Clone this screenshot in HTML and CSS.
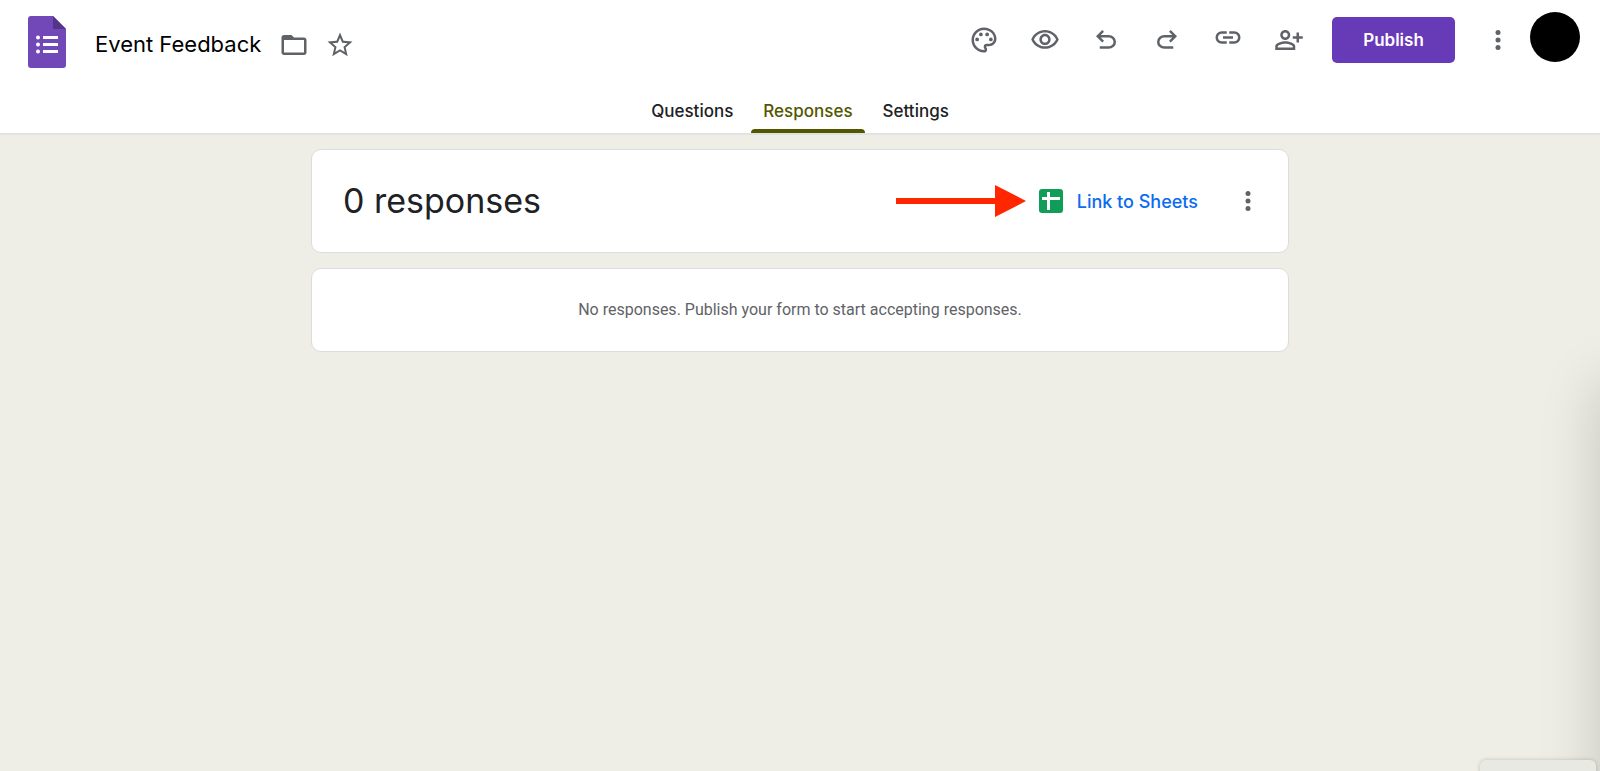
FILE: index.html
```
<!DOCTYPE html>
<html lang="en">
<head>
  <meta charset="UTF-8">
  <title>Event Feedback</title>
  <meta name="viewport" content="width=device-width, initial-scale=1.0">
  <link rel="stylesheet" href="styles.css">
</head>

<body>
  <header class="header">
    <div class="topbar">
      <div class="doc">
        <a class="logo" href="#" aria-label="Forms home">
          <svg width="38" height="52" viewBox="0 0 38 52">
            <path fill="#7248b9" d="M3 0h22l13 13v36a3 3 0 0 1-3 3H3a3 3 0 0 1-3-3V3a3 3 0 0 1 3-3z"/>
            <path fill="#533488" d="M25 0l13 13H25z"/>
            <g fill="#fff">
              <circle cx="10" cy="21.500" r="2"/>
              <circle cx="10" cy="28.500" r="2"/>
              <circle cx="10" cy="35.500" r="2"/>
              <path d="M15 20h15v3H15zM15 27h15v3H15zM15 34h15v3H15z"/>
            </g>
          </svg>
        </a>
        <h1 class="doc-title">Event Feedback</h1>
        <button class="doc-btn" type="button" aria-label="Move to folder">
          <svg class="icon" viewBox="0 0 24 24"><path d="M20 6h-8l-2-2H4c-1.100 0-2 .9-2 2v12c0 1.100.9 2 2 2h16c1.100 0 2-.9 2-2V8c0-1.100-.9-2-2-2zm0 12H4V8h16v10z"/></svg>
        </button>
        <button class="doc-btn" type="button" aria-label="Star">
          <svg class="icon" viewBox="0 0 24 24"><path d="M22 9.240l-7.190-.62L12 2 9.190 8.630 2 9.240l5.460 4.730L5.820 21 12 17.270 18.180 21l-1.630-7.030L22 9.240zM12 15.400l-3.760 2.270 1-4.280-3.320-2.880 4.380-.38L12 6.100l1.710 4.040 4.380.38-3.320 2.880 1 4.280L12 15.400z"/></svg>
        </button>
      </div>

      <div class="actions">
        <button class="icon-btn" type="button" aria-label="Customize theme">
          <svg class="icon" viewBox="0 0 24 24"><path d="M12 22C6.490 22 2 17.510 2 12S6.490 2 12 2s10 4.040 10 9c0 3.310-2.690 6-6 6h-1.770c-.28 0-.5.22-.5.5 0 .12.05.23.13.33.41.47.64 1.060.64 1.670A2.500 2.500 0 0 1 12 22zm0-18c-4.410 0-8 3.590-8 8s3.590 8 8 8c.28 0 .5-.22.5-.5a.54.54 0 0 0-.14-.35c-.41-.46-.63-1.050-.63-1.650a2.500 2.500 0 0 1 2.500-2.500H16c2.210 0 4-1.790 4-4 0-3.860-3.590-7-8-7z"/><circle cx="6.500" cy="11.500" r="1.500"/><circle cx="9.500" cy="7.500" r="1.500"/><circle cx="14.500" cy="7.500" r="1.500"/><circle cx="17.500" cy="11.500" r="1.500"/></svg>
        </button>
        <button class="icon-btn" type="button" aria-label="Preview">
          <svg class="icon" viewBox="0 0 24 24"><path d="M12 6c3.790 0 7.170 2.130 8.820 5.500C19.170 14.870 15.790 17 12 17s-7.170-2.130-8.820-5.500C4.830 8.130 8.210 6 12 6m0-2C7 4 2.730 7.110 1 11.500 2.730 15.890 7 19 12 19s9.270-3.110 11-7.500C21.270 7.110 17 4 12 4zm0 5c1.380 0 2.500 1.120 2.500 2.500S13.380 14 12 14s-2.500-1.120-2.500-2.500S10.620 9 12 9m0-2c-2.480 0-4.500 2.020-4.500 4.500S9.520 16 12 16s4.500-2.020 4.500-4.500S14.480 7 12 7z"/></svg>
        </button>
        <button class="icon-btn" type="button" aria-label="Undo">
          <svg class="icon" viewBox="0 0 24 24"><path d="M7 19v-2h7.100q1.575 0 2.737-1T18 13.500 16.838 11 14.100 10H7.800l2.600 2.600L9 14 4 9l5-5 1.400 1.400L7.800 8h6.300q2.425 0 4.163 1.575T20 13.500t-1.737 3.925T14.100 19z"/></svg>
        </button>
        <button class="icon-btn" type="button" aria-label="Redo">
          <svg class="icon" viewBox="0 0 24 24"><path d="M17 19v-2H9.900q-1.575 0-2.737-1T6 13.500 7.162 11 9.900 10h6.300l-2.600 2.600L15 14l5-5-5-5-1.400 1.400L16.200 8H9.900q-2.425 0-4.163 1.575T4 13.500t1.737 3.925T9.900 19z"/></svg>
        </button>
        <button class="icon-btn" type="button" aria-label="Copy link">
          <svg class="icon" viewBox="0 2 24 24"><path d="M11 17H7q-2.075 0-3.537-1.463T2 12t1.463-3.537T7 7h4v2H7q-1.250 0-2.125.875T4 12t.875 2.125T7 15h4zm-3-4v-2h8v2zm5 4v-2h4q1.250 0 2.125-.875T20 12t-.875-2.125T17 9h-4V7h4q2.075 0 3.538 1.463T22 12t-1.463 3.537T17 17z"/></svg>
        </button>
        <button class="icon-btn" type="button" aria-label="Share">
          <svg class="icon" viewBox="0 0 24 24"><path d="M13 8c0-2.210-1.790-4-4-4S5 5.790 5 8s1.790 4 4 4 4-1.790 4-4zm-2 0c0 1.100-.9 2-2 2s-2-.9-2-2 .9-2 2-2 2 .9 2 2zM1 17v3h16v-3c0-2.660-5.330-4-8-4s-8 1.340-8 4zm2 1v-1c.2-.71 3.300-2 6-2s5.780 1.280 6 2v1H3zM20 14v-3h3V9h-3V6h-2v3h-3v2h3v3h2z"/></svg>
        </button>
        <button class="publish" type="button">Publish</button>
        <button class="icon-btn" type="button" aria-label="More">
          <svg class="icon" viewBox="0 0 24 24"><circle cx="12" cy="6" r="2"/><circle cx="12" cy="12" r="2"/><circle cx="12" cy="18" r="2"/></svg>
        </button>
        <button class="avatar" type="button" aria-label="Account"></button>
      </div>
    </div>

    <nav class="tabs">
      <a class="tab" href="#questions">Questions</a>
      <a class="tab active" href="#responses">Responses</a>
      <a class="tab" href="#settings">Settings</a>
    </nav>
  </header>

  <main class="content">
    <section class="card summary">
      <h2 class="count">0 responses</h2>
      <svg class="arrow" width="130" height="32" viewBox="0 0 130 32">
        <path fill="#ff2600" d="M0 13h99V0l31 16-31 16V19H0z"/>
      </svg>
      <button class="sheets" type="button">
        <svg width="24" height="24" viewBox="0 0 24 24">
          <rect width="24" height="24" rx="3" fill="#0f9d58"/>
          <path fill="#fff" d="M8 3h3v5h10v3H11v10H8V11H3V8h5z"/>
        </svg>
        Link to Sheets
      </button>
      <button class="icon-btn" type="button" aria-label="More options">
        <svg class="icon" viewBox="0 0 24 24"><circle cx="12" cy="6" r="2"/><circle cx="12" cy="12" r="2"/><circle cx="12" cy="18" r="2"/></svg>
      </button>
    </section>

    <section class="card empty">
      <p>No responses. Publish your form to start accepting responses.</p>
    </section>
  </main>

  <!-- panel parked off the right edge, only its shadow shows -->
  <div class="side-panel"></div>
  <div class="corner-box"></div>
</body>
</html>
```
FILE: styles.css
```
:root {
  --bg: #eeeee6;
  --fg: #202124;
  --muted: #5f6368;
  --line: #dadce0;
  --accent: #525700;
  --purple: #673ab7;
  --link: #0b6cf0;
}
* { box-sizing: border-box; }
body {
  margin: 0;
  min-height: 100vh;
  overflow-x: hidden;
  font-family: Inter, "Open Sans", sans-serif;
  font-size: 17px;
  background: var(--bg);
  color: var(--fg);
}
button {
  padding: 0;
  border: none;
  background: transparent;
  font: inherit;
  color: inherit;
  cursor: pointer;
}
svg { display: block; }
.icon {
  width: 30px; height: 30px;
  fill: var(--muted);
}
.header {
  background: #fff;
  border-bottom: 2px solid #e1e3e1;
}
.topbar {
  display: flex;
  justify-content: space-between;
  align-items: flex-start;
  padding: 12px 20px 0 28px;
}
.doc {
  display: flex;
  align-items: center;
  padding-top: 4px;
}
.doc-title {
  margin: 0 10px 0 29px;
  padding-top: 4px;
  font-size: 22px;
  line-height: 28px;
  font-weight: 400;
  color: #000;
  white-space: nowrap;
}
.doc-btn {
  padding: 14px 8px 8px;
}
.actions {
  display: flex;
  align-items: flex-start;
}
.icon-btn {
  display: flex;
  justify-content: center;
  align-items: center;
  width: 61px; height: 56px;
}
.publish {
  margin: 5px 12px 0 13px;
  width: 123px; height: 46px;
  border-radius: 5px;
  background: var(--purple);
  color: #fff;
  font-weight: 600;
}
.avatar {
  width: 50px; height: 50px;
  margin-left: 2px;
  border-radius: 50%;
  background: #000;
}
.tabs {
  display: flex;
  justify-content: center;
  gap: 6px;
  padding-top: 20px;
}
.tab {
  padding: 12px 12px 7px;
  border-bottom: 4px solid transparent;
  line-height: 22px;
  font-weight: 500;
  color: var(--fg);
  text-decoration: none;
}
/* separate bar so only its top corners are rounded */
.tab.active {
  color: var(--accent);
  border-bottom: none;
}
.tab.active::after {
  content: "";
  display: block;
  height: 4px;
  margin: 7px -12px -7px;
  border-radius: 4px 4px 0 0;
  background: var(--accent);
}
.content {
  display: flex;
  flex-direction: column;
  gap: 15px;
  max-width: 978px;
  margin: 0 auto;
  padding-top: 14px;
}
.card {
  background: #fff;
  border: 1px solid var(--line);
  border-radius: 10px;
}
.summary {
  display: flex;
  align-items: center;
  padding: 23px 10px 23px 31px;
}
.count {
  margin: 0 auto 0 0;
  font-size: 34px;
  line-height: 44px;
  font-weight: 400;
}
.arrow {
  margin-right: 13px;
}
.sheets {
  display: flex;
  align-items: center;
  gap: 14px;
  margin-right: 19px;
  color: var(--link);
  font-size: 18px;
  font-weight: 500;
  white-space: nowrap;
}
.empty {
  padding: 30px;
  text-align: center;
}
.empty p {
  margin: 0;
  font-family: Roboto, sans-serif;
  font-size: 16px;
  line-height: 22px;
  color: var(--muted);
}
.side-panel {
  position: fixed;
  top: 384px; bottom: -60px; left: 100%;
  width: 60px;
  box-shadow: 0 0 60px rgba(0,0,0,.18);
}
.corner-box {
  position: fixed;
  right: 4px; bottom: -40px;
  width: 116px; height: 51px;
  border-radius: 6px;
  background: #e8e9e3;
  box-shadow: 0 0 4px rgba(0,0,0,.2);
}
```
